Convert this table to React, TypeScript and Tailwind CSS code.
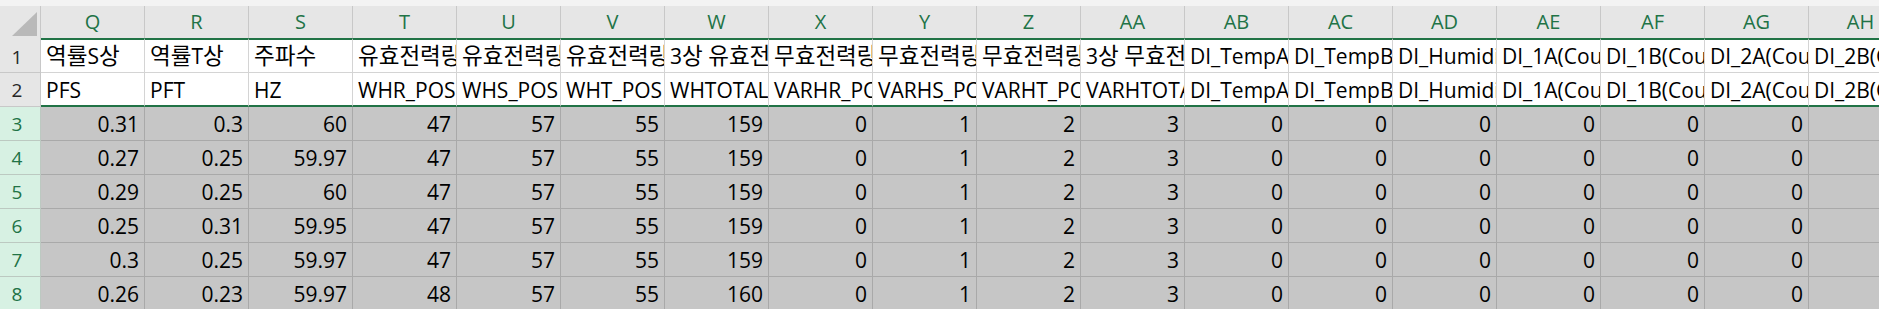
import React from "react";

const COLS = ["Q","R","S","T","U","V","W","X","Y","Z","AA","AB","AC","AD","AE","AF","AG","AH"];

const ROW1 = ["역률S상","역률T상","주파수","유효전력량(R상)","유효전력량(S상)","유효전력량(T상)","3상 유효전력량","무효전력량(R상)","무효전력량(S상)","무효전력량(T상)","3상 무효전력량","DI_TempA","DI_TempB","DI_Humidity","DI_1A(Count)","DI_1B(Count)","DI_2A(Count)","DI_2B(Count)"];
const ROW2 = ["PFS","PFT","HZ","WHR_POS","WHS_POS","WHT_POS","WHTOTAL_POS","VARHR_POS","VARHS_POS","VARHT_POS","VARHTOTAL_POS","DI_TempA","DI_TempB","DI_Humidity","DI_1A(Count)","DI_1B(Count)","DI_2A(Count)","DI_2B(Count)"];

const DATA: string[][] = [
  ["0.31","0.3","60","47","57","55","159","0","1","2","3","0","0","0","0","0","0","0"],
  ["0.27","0.25","59.97","47","57","55","159","0","1","2","3","0","0","0","0","0","0","0"],
  ["0.29","0.25","60","47","57","55","159","0","1","2","3","0","0","0","0","0","0","0"],
  ["0.25","0.31","59.95","47","57","55","159","0","1","2","3","0","0","0","0","0","0","0"],
  ["0.3","0.25","59.97","47","57","55","159","0","1","2","3","0","0","0","0","0","0","0"],
  ["0.26","0.23","59.97","48","57","55","160","0","1","2","3","0","0","0","0","0","0","0"],
];

const FONT = { fontFamily: '"Open Sans", "Noto Sans CJK KR", sans-serif' };

function Mixed({ text }: { text: string }) {
  const parts = text.split(/([가-힣]+)/).filter((p) => p.length > 0);
  return (
    <>
      {parts.map((p, i) =>
        /[가-힣]/.test(p) ? (
          <span key={i} className="text-[22.5px]">
            {p}
          </span>
        ) : (
          <span key={i}>{p}</span>
        )
      )}
    </>
  );
}

export default function App() {
  return (
    <div className="w-[1879px] h-[309px] overflow-hidden bg-white" style={FONT}>
      <div className="w-[1913px]">
        <div className="h-[6px] bg-[#f3f3f3]" />
        {/* column header */}
        <div className="flex h-[32px]">
          <div className="relative w-[41px] shrink-0 bg-[#e6e6e6] border-r border-[#c8c8c8]">
            <svg className="absolute left-0 top-0" width="41" height="32" viewBox="0 0 41 32">
              <polygon points="37,6 37,30 12,30" fill="#b9b9b9" />
            </svg>
          </div>
          {COLS.map((c) => (
            <div
              key={c}
              className="w-[104px] shrink-0 bg-[#e6e6e6] border-r border-[#c8c8c8] flex items-center justify-center text-[20px] leading-[26px] text-[#217346]"
            >
              {c}
            </div>
          ))}
        </div>
        {/* row 1 */}
        <div className="flex h-[35px]">
          <div className="w-[41px] shrink-0 bg-[#e6e6e6] border-r border-b border-[#c8c8c8] flex items-center justify-center pr-[6px] pt-[3px] text-[19px] leading-[24px] text-[#262626]">
            1
          </div>
          {ROW1.map((t, i) => (
            <div
              key={i}
              className="w-[104px] shrink-0 overflow-hidden whitespace-nowrap border-t-2 border-t-[#217346] border-b border-b-[#d4d4d4] border-r border-r-[#d4d4d4] flex items-center pl-[5px] text-[21px] leading-[28px] text-black"
            >
              <span className="whitespace-nowrap">
                <Mixed text={t} />
              </span>
            </div>
          ))}
        </div>
        {/* row 2 */}
        <div className="flex h-[34px]">
          <div className="w-[41px] shrink-0 bg-[#e6e6e6] border-r border-b border-[#c8c8c8] flex items-center justify-center pr-[6px] text-[19px] leading-[24px] text-[#262626]">
            2
          </div>
          {ROW2.map((t, i) => (
            <div
              key={i}
              className="w-[104px] shrink-0 overflow-hidden whitespace-nowrap border-b-2 border-b-[#217346] border-r border-r-[#d4d4d4] flex items-center pl-[5px] pt-[2px] text-[21px] leading-[28px] text-black"
            >
              {t}
            </div>
          ))}
        </div>
        {/* data rows */}
        {DATA.map((row, r) => (
          <div key={r} className="flex h-[34px]">
            <div className="w-[41px] shrink-0 bg-[#d7f1e3] border-r border-b border-[#bcc9c1] flex items-center justify-center pr-[6px] text-[19px] leading-[24px] text-[#217346]">
              {r + 3}
            </div>
            {row.map((v, i) => (
              <div
                key={i}
                className="w-[104px] shrink-0 overflow-hidden whitespace-nowrap bg-[#c6c6c6] border-r border-b border-[#a9a9a9] flex items-center justify-end pr-[5px] text-[21px] leading-[28px] text-black"
              >
                {v}
              </div>
            ))}
          </div>
        ))}
      </div>
    </div>
  );
}
